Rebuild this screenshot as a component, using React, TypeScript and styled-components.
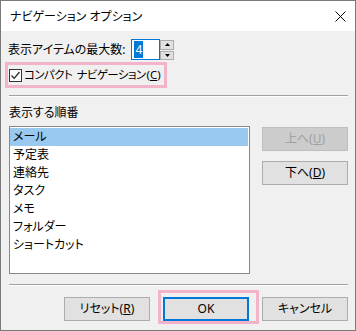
import React from "react";
import styled, { createGlobalStyle } from "styled-components";

const Global = createGlobalStyle`
  html, body { margin: 0; padding: 0; background: #ffffff; }
  body {
    font-family: "Noto Sans", "Noto Sans CJK JP", sans-serif;
    font-size: 12px;
    color: #000;
    font-feature-settings: "palt" 1;
  }
  * { box-sizing: border-box; }
`;

const Window = styled.div`
  width: 356px;
  height: 331px;
  border: 1px solid #7a7a7a;
  background: #f0f0f0;
  display: flex;
  flex-direction: column;
`;

const TitleBar = styled.div`
  height: 30px;
  background: #ffffff;
  display: flex;
  align-items: center;
  justify-content: space-between;
  padding: 0 9px 0 9px;
  font-size: 12px;
`;

const CloseIcon = styled.svg`
  width: 11px;
  height: 11px;
`;

const Body = styled.div`
  flex: 1;
  display: flex;
  flex-direction: column;
  padding: 8px 7px 0 7px;
`;

const Row = styled.div`
  display: flex;
  align-items: center;
  height: 21px;
`;

const Label = styled.span<{ $tight?: boolean }>`
  line-height: 16px;
  white-space: nowrap;
  font-size: ${(p) => (p.$tight ? "11.5px" : "12px")};
  letter-spacing: ${(p) => (p.$tight ? "-0.6px" : "normal")};
  word-spacing: ${(p) => (p.$tight ? "2px" : "normal")};
`;

const Accel = styled.span`
  letter-spacing: 0;
  margin-left: 1px;
`;

const Spinner = styled.div`
  display: flex;
  margin-left: 6px;
  height: 21px;
`;

const SpinInput = styled.div`
  width: 29px;
  height: 21px;
  border: 1px solid #0078d7;
  background: #fff;
  padding: 2px 0 0 2px;
  line-height: 15px;
`;

const Selected = styled.span`
  background: #0078d7;
  color: #fff;
  padding: 0 1px;
`;

const SpinButtons = styled.div`
  display: flex;
  flex-direction: column;
  width: 14px;
  margin-top: 1px;
  gap: 1px;
`;

const SpinBtn = styled.div`
  flex: 1;
  height: 9px;
  border: 1px solid #adadad;
  background: #e1e1e1;
  display: flex;
  align-items: center;
  justify-content: center;
`;

const CheckRow = styled.label`
  display: flex;
  align-self: flex-start;
  align-items: center;
  height: 18px;
  margin-top: 6px;
  margin-left: 1px;
  padding-right: 2px;
  outline: 3px solid #f3b4cb;
  outline-offset: 1px;
  gap: 2px;
`;

const CheckBox = styled.span`
  width: 13px;
  height: 13px;
  border: 1px solid #333;
  background: #fff;
  display: flex;
  align-items: center;
  justify-content: center;
`;

const Underline = styled.span`
  text-decoration: underline;
`;

const Separator = styled.div<{ $top: number }>`
  margin-top: ${(p) => p.$top}px;
  margin-left: 1px;
  height: 2px;
  border-top: 1px solid #a0a0a0;
  border-bottom: 1px solid #ffffff;
`;

const SectionLabel = styled.div`
  margin-top: 8px;
  margin-left: 1px;
  line-height: 16px;
`;

const Middle = styled.div`
  display: flex;
  margin-top: 5px;
  margin-left: 1px;
  gap: 12px;
`;

const ListBox = styled.div`
  width: 241px;
  height: 148px;
  border: 1px solid #828790;
  background: #fff;
  padding: 1px 1px 0 0;
`;

const ListItem = styled.div<{ $selected?: boolean }>`
  height: 18px;
  line-height: 18px;
  padding-left: 3px;
  background: ${(p) => (p.$selected ? "#99c9ef" : "transparent")};
`;

const SideButtons = styled.div`
  display: flex;
  flex-direction: column;
  gap: 10px;
  padding-top: 1px;
`;

const Button = styled.div<{ $disabled?: boolean; $default?: boolean }>`
  position: relative;
  width: 86px;
  height: 24px;
  border: ${(p) => (p.$default ? "2px solid #0078d7" : p.$disabled ? "1px solid #bfbfbf" : "1px solid #adadad")};
  background: ${(p) => (p.$disabled ? "#cccccc" : "#e1e1e1")};
  color: ${(p) => (p.$disabled ? "#a0a0a0" : "#000")};
  display: flex;
  align-items: center;
  justify-content: center;
  line-height: 16px;
`;

const Highlight = styled.span`
  position: absolute;
  left: -7px;
  right: -12px;
  top: -9px;
  bottom: -5px;
  border: 3px solid #f3b4cb;
  pointer-events: none;
`;

const BottomRow = styled.div`
  display: flex;
  justify-content: flex-end;
  gap: 13px;
  margin-top: 11px;
`;

const items = ["メール", "予定表", "連絡先", "タスク", "メモ", "フォルダー", "ショートカット"];

export default function App() {
  return (
    <>
      <Global />
      <Window>
        <TitleBar>
          <span>ナビゲーション オプション</span>
          <CloseIcon viewBox="0 0 11 11">
            <path d="M0.5 0.5 L10.5 10.5 M10.5 0.5 L0.5 10.5" stroke="#000" strokeWidth="1" fill="none" />
          </CloseIcon>
        </TitleBar>
        <Body>
          <Row>
            <Label>表示アイテムの最大数:</Label>
            <Spinner>
              <SpinInput>
                <Selected>4</Selected>
              </SpinInput>
              <SpinButtons>
                <SpinBtn>
                  <svg width="5" height="3" viewBox="0 0 5 3">
                    <path d="M2.5 0 L5 3 L0 3 Z" fill="#000" />
                  </svg>
                </SpinBtn>
                <SpinBtn>
                  <svg width="5" height="3" viewBox="0 0 5 3">
                    <path d="M0 0 L5 0 L2.5 3 Z" fill="#000" />
                  </svg>
                </SpinBtn>
              </SpinButtons>
            </Spinner>
          </Row>
          <CheckRow>
            <CheckBox>
              <svg width="11" height="11" viewBox="0 0 11 11">
                <path d="M1.5 5.5 L4.2 8.3 L9.5 2" stroke="#222" strokeWidth="1.2" fill="none" />
              </svg>
            </CheckBox>
            <Label $tight>
              コンパクト ナビゲーション
              <Accel>
                (<Underline>C</Underline>)
              </Accel>
            </Label>
          </CheckRow>
          <Separator $top={11} />
          <SectionLabel>表示する順番</SectionLabel>
          <Middle>
            <ListBox>
              {items.map((it, i) => (
                <ListItem key={it} $selected={i === 0}>
                  {it}
                </ListItem>
              ))}
            </ListBox>
            <SideButtons>
              <Button $disabled>
                上へ(<Underline>U</Underline>)
              </Button>
              <Button>
                下へ(<Underline>D</Underline>)
              </Button>
            </SideButtons>
          </Middle>
          <Separator $top={10} />
          <BottomRow>
            <Button>
              リセット(<Underline>R</Underline>)
            </Button>
            <Button $default>
              OK
              <Highlight />
            </Button>
            <Button>キャンセル</Button>
          </BottomRow>
        </Body>
      </Window>
    </>
  );
}
